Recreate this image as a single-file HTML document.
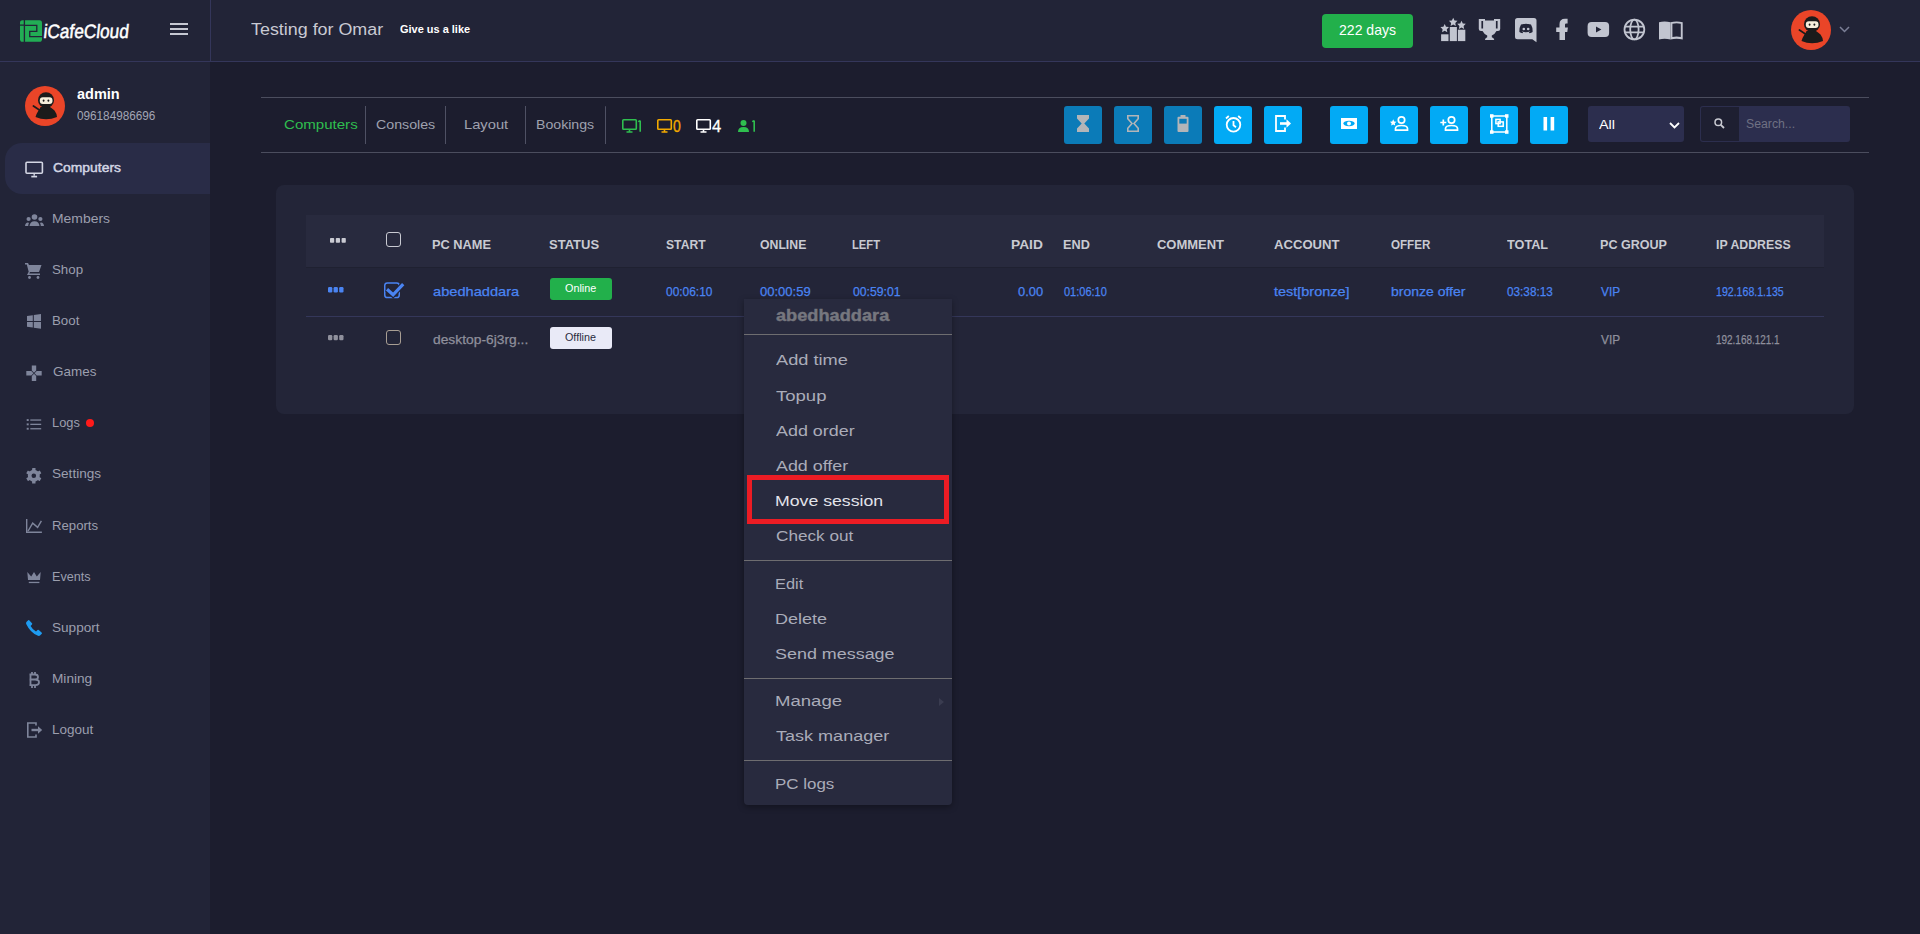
<!DOCTYPE html>
<html><head><meta charset="utf-8"><style>
html,body{margin:0;padding:0;width:1920px;height:934px;overflow:hidden;background:#1c1d2e;font-family:'Liberation Sans', sans-serif;}
.t{position:absolute;white-space:pre;transform-origin:0 0;}
.a{position:absolute;}
svg{position:absolute;overflow:visible;}
</style></head><body>
<!-- header -->
<div class="a" style="left:0;top:0;width:1920px;height:61px;background:#222437;"></div>
<div class="a" style="left:0;top:61px;width:1920px;height:1px;background:#34365a;"></div>
<div class="a" style="left:210px;top:0;width:1px;height:61px;background:#34365a;"></div>
<!-- sidebar -->
<div class="a" style="left:0;top:62px;width:210px;height:872px;background:#222437;"></div>
<div class="a" style="left:5px;top:143px;width:205px;height:51px;background:#292c47;border-radius:17px 0 0 17px;"></div>
<!-- logo -->
<svg style="left:20px;top:20px" width="22" height="22" viewBox="0 0 21.5 21.2">
  <rect x="0" y="0" width="21.5" height="21.2" rx="2.5" fill="#22ad55"/>
  <path d="M4.3 -1V23 M-1 4.9H4.3 M4.3 5.1H16.4V11H9.5V16.1H23" stroke="#222437" stroke-width="1.3" fill="none"/>
</svg>
<!-- hamburger -->
<div class="a" style="left:170px;top:22.5px;width:18px;height:2px;background:#c6c8d2;"></div>
<div class="a" style="left:170px;top:27.5px;width:18px;height:2px;background:#c6c8d2;"></div>
<div class="a" style="left:170px;top:32.5px;width:18px;height:2px;background:#c6c8d2;"></div>
<!-- green badge -->
<div class="a" style="left:1322px;top:14px;width:91px;height:34px;background:#22b04b;border-radius:4px;"></div>
<!-- header icons -->
<svg style="left:1436px;top:14px" width="104" height="32" viewBox="0 0 104 32" fill="#c2c5d0">
  <rect x="5.1" y="20.3" width="7.4" height="6.8"/><rect x="13.8" y="13" width="7.1" height="14.1"/><rect x="21.9" y="15.7" width="7.4" height="11.4"/>
  <path d="M8.7 10l1.3 2.7 3 .4-2.2 2.1.5 3-2.6-1.4-2.6 1.4.5-3-2.2-2.1 3-.4z"/>
  <path d="M17.2 3.7l1.3 2.7 3 .4-2.2 2.1.5 3-2.6-1.4-2.6 1.4.5-3-2.2-2.1 3-.4z"/>
  <path d="M25.5 6.7l1.3 2.7 3 .4-2.2 2.1.5 3-2.6-1.4-2.6 1.4.5-3-2.2-2.1 3-.4z"/>
  <path fill-rule="evenodd" d="M42.8 4.9H49V6.5H58V4.9H64.2V15Q64.2 17 62 17H60.5Q59 20 55.8 21.5V23.3Q58 23.8 58.3 26H48.9Q49.2 23.8 51.2 23.3V21.5Q48 20 46.5 17H45Q42.8 17 42.8 15Z M45.4 7V14.6H47.1V7Z M59.9 7V14.6H61.6V7Z"/>
  <path d="M81.5 4.1H98Q100.5 4.1 100.5 6.6V28.2L96.3 25.2H81.5Q79 25.2 79 22.7V6.6Q79 4.1 81.5 4.1Z"/>
  <path d="M85 10.5Q87.3 9.6 88.6 10Q89.8 9.8 90 9.8Q90.2 9.8 91.4 10Q92.7 9.6 95 10.5Q96.8 13.5 96.6 18Q95.3 19 93.6 19.3L92.8 18.2Q94 17.6 94.3 17.2Q92.3 18.2 90 18.2Q87.7 18.2 85.7 17.2Q86 17.6 87.2 18.2L86.4 19.3Q84.7 19 83.4 18Q83.2 13.5 85 10.5Z" fill="#222437"/>
  <circle cx="87.8" cy="15" r="1.3"/><circle cx="92.2" cy="15" r="1.3"/>
</svg>
<svg style="left:1550px;top:14px" width="140" height="32" viewBox="0 0 140 32" fill="#c2c5d0">
  <path d="M9.5 25.9V17.9H6.2V13.5H9.5V10.2Q9.5 4.7 15 4.7H17.6V9.5H16.1Q15 9.5 15 10.8V13.5H17.9L17.3 17.9H15V25.9Z"/>
  <rect x="37.6" y="8" width="21.5" height="15" rx="4"/>
  <path d="M46 12.4V18.6L51.4 15.5Z" fill="#222437"/>
  <g fill="none" stroke="#c2c5d0" stroke-width="1.8"><circle cx="84.4" cy="15.5" r="9.9"/><ellipse cx="84.4" cy="15.5" rx="4.2" ry="9.9"/><path d="M75 12.6H93.8M75 18.4H93.8"/></g>
  <path d="M109 8.2Q114.5 6.6 120.5 8.2V25.5Q114.5 24 109 25.5Z"/>
  <path fill-rule="evenodd" d="M120.5 8.2Q126.5 6.6 132.7 8.2V25.5Q126.5 24 120.5 25.5Z M122.4 9.8V23Q126.5 22.2 130.8 23V9.8Q126.5 8.8 122.4 9.8Z"/>
</svg>
<!-- header avatar -->
<svg style="left:1791px;top:10px" width="40" height="40" viewBox="0 0 40 40">
  <circle cx="20" cy="20" r="20" fill="#ea4528"/>
  <path d="M15.5 21 H25 Q27.5 22.5 29.5 24.5 Q31.8 27.5 32 31 Q21 35.5 10.5 31 Q11.5 27.5 13.5 24.5 Q15 22.5 15.5 21Z" fill="#1b1b1b"/>
  <circle cx="21" cy="14.2" r="8" fill="#1b1b1b"/>
  <rect x="14.8" y="11.3" width="12.7" height="6.6" rx="3" fill="#f6efdc"/>
  <ellipse cx="18.6" cy="14.6" rx="0.9" ry="1.2" fill="#1b1b1b"/><ellipse cx="23.4" cy="14.6" rx="0.9" ry="1.2" fill="#1b1b1b"/>
  <path d="M8.4 20 L14.8 24.2" stroke="#1b1b1b" stroke-width="1.7" stroke-linecap="round"/>
</svg>
<svg style="left:1839px;top:26px" width="11" height="7" viewBox="0 0 11 7"><path d="M1 1L5.5 5.5L10 1" stroke="#7b7f96" stroke-width="1.5" fill="none"/></svg>
<!-- sidebar avatar -->
<svg style="left:25px;top:86px" width="40" height="40" viewBox="0 0 40 40">
  <circle cx="20" cy="20" r="20" fill="#ea4528"/>
  <path d="M15.5 21 H25 Q27.5 22.5 29.5 24.5 Q31.8 27.5 32 31 Q21 35.5 10.5 31 Q11.5 27.5 13.5 24.5 Q15 22.5 15.5 21Z" fill="#1b1b1b"/>
  <circle cx="21" cy="14.2" r="8" fill="#1b1b1b"/>
  <rect x="14.8" y="11.3" width="12.7" height="6.6" rx="3" fill="#f6efdc"/>
  <ellipse cx="18.6" cy="14.6" rx="0.9" ry="1.2" fill="#1b1b1b"/><ellipse cx="23.4" cy="14.6" rx="0.9" ry="1.2" fill="#1b1b1b"/>
  <path d="M8.4 20 L14.8 24.2" stroke="#1b1b1b" stroke-width="1.7" stroke-linecap="round"/>
</svg>
<!-- sidebar icons -->
<svg style="left:25px;top:161px" width="19" height="17" viewBox="0 0 19 17" fill="none" stroke="#d3d6e4" stroke-width="1.6">
  <rect x="1" y="1.2" width="16.4" height="11" rx="1"/><path d="M9.2 12V14.8" stroke-width="1.4"/><path d="M6.3 15.6H12.1" stroke-width="1.7"/>
</svg>
<svg style="left:25px;top:214px" width="19" height="12" viewBox="0 0 19 12" fill="#7f859b">
  <circle cx="9.5" cy="3" r="2.8"/><circle cx="3.6" cy="5" r="2.1"/><circle cx="15.4" cy="5" r="2.1"/>
  <path d="M4.5 12Q5 7.3 9.5 7.3Q14 7.3 14.5 12Z M0 12Q0.3 8.6 3 8.4Q3.6 8.4 4 9Q3.3 10 3.2 12Z M19 12Q18.7 8.6 16 8.4Q15.4 8.4 15 9Q15.7 10 15.8 12Z"/>
</svg>
<svg style="left:25px;top:263px" width="17" height="16" viewBox="0 0 17 16" fill="#7f859b">
  <path d="M0 0H3L4 2H16.5L14 9H5L4.3 10.5H15V12H2L3.7 8.8L1.8 1.5H0Z"/><circle cx="4.5" cy="14.5" r="1.4"/><circle cx="13" cy="14.5" r="1.4"/>
</svg>
<svg style="left:27px;top:314px" width="14" height="15" viewBox="0 0 14 15" fill="#7f859b">
  <path d="M0 2L5.8 1.2V6.9H0Z M6.8 1L14 0V6.9H6.8Z M0 7.9H5.8V13.6L0 12.8Z M6.8 7.9H14V14.8L6.8 13.8Z"/>
</svg>
<svg style="left:26px;top:365px" width="17" height="17" viewBox="0 0 17 17" fill="#7f859b">
  <path d="M5.8 0.6H10.2V5.6L8 7.8L5.8 5.6Z M5.8 15.9H10.2V10.9L8 8.7L5.8 10.9Z M0.3 6.1V10.5H5.3L7.5 8.3L5.3 6.1Z M15.7 6.1V10.5H10.7L8.5 8.3L10.7 6.1Z"/>
</svg>
<svg style="left:26px;top:418px" width="16" height="13" viewBox="0 0 16 13" fill="#7f859b">
  <rect x="0.7" y="1.1" width="2" height="1.9"/><rect x="0.7" y="5.4" width="2" height="1.9"/><rect x="0.7" y="9.8" width="2" height="1.9"/>
  <rect x="4.3" y="1.4" width="10.9" height="1.3"/><rect x="4.3" y="5.7" width="10.9" height="1.3"/><rect x="4.3" y="10.1" width="10.9" height="1.3"/>
</svg>
<div class="a" style="left:86px;top:419px;width:8px;height:8px;border-radius:50%;background:#ff1a1a;"></div>
<svg style="left:26px;top:467.5px" width="16" height="16" viewBox="0 0 16 16" fill="#7f859b">
  <g transform="translate(7.8 7.8)">
    <path fill-rule="evenodd" d="M0 -6A6 6 0 1 1 0 6A6 6 0 1 1 0 -6Z M0 -2.3A2.3 2.3 0 1 0 0 2.3A2.3 2.3 0 1 0 0 -2.3Z"/>
    <g><rect x="-1.7" y="-7.8" width="3.4" height="3" rx="0.4"/><rect x="-1.7" y="4.8" width="3.4" height="3" rx="0.4"/></g>
    <g transform="rotate(60)"><rect x="-1.7" y="-7.8" width="3.4" height="3" rx="0.4"/><rect x="-1.7" y="4.8" width="3.4" height="3" rx="0.4"/></g>
    <g transform="rotate(120)"><rect x="-1.7" y="-7.8" width="3.4" height="3" rx="0.4"/><rect x="-1.7" y="4.8" width="3.4" height="3" rx="0.4"/></g>
  </g>
</svg>
<svg style="left:26px;top:519px" width="17" height="15" viewBox="0 0 17 15" fill="none" stroke="#7f859b" stroke-width="1.4">
  <path d="M0.7 0V13.3H15.9 M2.1 12L6.7 4.1L11.6 8.4L15.4 1.8"/>
</svg>
<svg style="left:27px;top:572px" width="15" height="12" viewBox="0 0 15 12" fill="#7f859b">
  <path d="M0.3 0L4.2 4.4L7 0L9.8 4.4L13.7 0L13 8.1H1Z"/><rect x="1.8" y="9.8" width="10.6" height="1.3"/>
</svg>
<svg style="left:26px;top:620px" width="16" height="16" viewBox="0 0 16 16" fill="#1e9bf0">
  <path d="M3.2 0.2L6 3.2Q6.5 3.8 6 4.5L4.6 6Q6.5 9.6 10 11.4L11.5 10Q12.2 9.5 12.8 10L15.8 12.8Q16.2 13.3 15.8 13.8L14 15.6Q13.2 16.2 12 15.8Q4.5 13 0.2 4Q-0.2 2.8 0.4 2L2.2 0.2Q2.7 -0.2 3.2 0.2Z"/>
</svg>
<svg style="left:28px;top:672px" width="12" height="16" viewBox="0 0 12 16" fill="none" stroke="#7f859b" stroke-width="1.8">
  <path d="M1.5 2.5H7Q10 2.5 10 5Q10 7.5 7 7.5H1.5 M7 7.5Q11 7.5 11 10.3Q11 13.2 7.5 13.2H1.5 M2.5 2.5V13.2 M4 0V2.5M7 0V2.5M4 13.2V16M7 13.2V16"/>
</svg>
<svg style="left:27px;top:722px" width="16" height="16" viewBox="0 0 16 16" fill="none" stroke="#7f859b" stroke-width="1.6">
  <path d="M9 3.5V1H0.8V15H9V12.5"/><path d="M4.5 8H12" stroke-width="2.4"/><path d="M11 4.3L15.2 8L11 11.7Z" fill="#7f859b" stroke="none"/>
</svg>

<!-- toolbar lines -->
<div class="a" style="left:261px;top:97px;width:1608px;height:1px;background:#4b4d5e;"></div>
<div class="a" style="left:261px;top:152px;width:1608px;height:1px;background:#4b4d5e;"></div>
<div class="a" style="left:365px;top:106px;width:1px;height:38px;background:#4f5164;"></div>
<div class="a" style="left:445px;top:106px;width:1px;height:38px;background:#4f5164;"></div>
<div class="a" style="left:525px;top:106px;width:1px;height:38px;background:#4f5164;"></div>
<div class="a" style="left:605px;top:106px;width:1px;height:38px;background:#4f5164;border-top-right-radius:3px;"></div>
<!-- status icons -->
<svg style="left:621.5px;top:119px" width="16" height="14" viewBox="0 0 16 14" fill="none" stroke="#2fbf4f" stroke-width="1.6"><rect x="0.8" y="0.8" width="13.5" height="9.4" rx="0.8"/><path d="M7.5 10.5V12.5M4.5 13H10.5"/></svg>
<svg style="left:656.5px;top:119px" width="16" height="14" viewBox="0 0 16 14" fill="none" stroke="#f2a900" stroke-width="1.6"><rect x="0.8" y="0.8" width="13.5" height="9.4" rx="0.8"/><path d="M7.5 10.5V12.5M4.5 13H10.5"/></svg>
<svg style="left:695.5px;top:119px" width="16" height="14" viewBox="0 0 16 14" fill="none" stroke="#ffffff" stroke-width="1.6"><rect x="0.8" y="0.8" width="13.5" height="9.4" rx="0.8"/><path d="M7.5 10.5V12.5M4.5 13H10.5"/></svg>
<svg style="left:738px;top:120px" width="11" height="12" viewBox="0 0 11 12" fill="#2fbf4f"><circle cx="5.5" cy="3" r="3"/><path d="M0 12Q0 7 5.5 7Q11 7 11 12Z"/></svg>

<svg style="left:636px;top:119px" width="8" height="14" viewBox="0 0 8 14"><path d="M4.2 1.6V12.7M2.2 2.6L4.2 1.6" stroke="#2fbf4f" stroke-width="1.6" fill="none"/></svg>
<svg style="left:750px;top:119px" width="8" height="14" viewBox="0 0 8 14"><path d="M4.2 1.6V12.7M2.2 2.6L4.2 1.6" stroke="#2fbf4f" stroke-width="1.6" fill="none"/></svg>
<!-- action buttons -->
<div class="a" style="left:1064px;top:106px;width:38px;height:38px;background:#0b7bb8;border-radius:3px;"></div>
<div class="a" style="left:1114px;top:106px;width:38px;height:38px;background:#0b7bb8;border-radius:3px;"></div>
<div class="a" style="left:1164px;top:106px;width:38px;height:38px;background:#0b7bb8;border-radius:3px;"></div>
<div class="a" style="left:1214px;top:106px;width:38px;height:38px;background:#02aaf5;border-radius:3px;"></div>
<div class="a" style="left:1264px;top:106px;width:38px;height:38px;background:#02aaf5;border-radius:3px;"></div>
<div class="a" style="left:1330px;top:106px;width:38px;height:38px;background:#02aaf5;border-radius:3px;"></div>
<div class="a" style="left:1380px;top:106px;width:38px;height:38px;background:#02aaf5;border-radius:3px;"></div>
<div class="a" style="left:1430px;top:106px;width:38px;height:38px;background:#02aaf5;border-radius:3px;"></div>
<div class="a" style="left:1480px;top:106px;width:38px;height:38px;background:#02aaf5;border-radius:3px;"></div>
<div class="a" style="left:1530px;top:106px;width:38px;height:38px;background:#02aaf5;border-radius:3px;"></div>
<!-- button icons -->
<svg style="left:1077px;top:115px" width="12" height="17" viewBox="0 0 12 17" fill="#b3b5b8"><path d="M0 0H12V3.5L7.3 8.5L12 13.5V17H0V13.5L4.7 8.5L0 3.5Z"/></svg>
<svg style="left:1127px;top:115px" width="12" height="17" viewBox="0 0 12 17" fill="none" stroke="#b3b5b8" stroke-width="1.6"><path d="M0.8 0.8H11.2V3.8L7 8.5L11.2 13.2V16.2H0.8V13.2L5 8.5L0.8 3.8Z"/></svg>
<svg style="left:1177px;top:115px" width="12" height="17" viewBox="0 0 12 17"><rect x="3.5" y="0" width="5" height="2" fill="#b3b5b8"/><rect x="0.5" y="1.8" width="11" height="15.2" rx="1" fill="#b3b5b8"/><rect x="2.3" y="3.8" width="7.4" height="4.8" fill="#0b7bb8"/></svg>
<svg style="left:1225px;top:115px" width="17" height="18" viewBox="0 0 17 18" fill="none" stroke="#fff" stroke-width="1.8"><circle cx="8.5" cy="9.8" r="6.8"/><path d="M8.5 6V10.3L11 12.3"/><path d="M1 3.5L3.8 1M16 3.5L13.2 1"/></svg>
<svg style="left:1275px;top:115px" width="17" height="17" viewBox="0 0 17 17" fill="none" stroke="#fff" stroke-width="1.8"><path d="M10 4.5V1H1V16H10V12.5"/><path d="M5 8.5H12" stroke-width="2.6"/><path d="M11.5 4.3L16 8.5L11.5 12.7Z" fill="#fff" stroke="none"/></svg>
<svg style="left:1341px;top:118px" width="16" height="11" viewBox="0 0 16 11"><rect x="0" y="0" width="16" height="11" fill="#fff"/><ellipse cx="8" cy="5.5" rx="5.6" ry="2.7" fill="#02aaf5"/><circle cx="8" cy="5.5" r="2" fill="#fff"/></svg>
<svg style="left:1390px;top:116px" width="19" height="15" viewBox="0 0 19 15" fill="none" stroke="#fff" stroke-width="1.7"><circle cx="11.5" cy="4" r="3.2"/><path d="M5.5 14.2V12.5Q5.5 9.5 11.5 9.5Q17.5 9.5 17.5 12.5V14.2Z"/><path d="M3.2 3.3l1 2.1 2.3.3-1.7 1.6.4 2.3-2-1.1-2 1.1.4-2.3L-0.1 5.7l2.3-.3z" fill="#fff" stroke="none"/></svg>
<svg style="left:1440px;top:116px" width="19" height="15" viewBox="0 0 19 15" fill="none" stroke="#fff" stroke-width="1.7"><circle cx="11.5" cy="4" r="3.2"/><path d="M5.5 14.2V12.5Q5.5 9.5 11.5 9.5Q17.5 9.5 17.5 12.5V14.2Z"/><path d="M0.3 6.5H6.3M3.3 3.5V9.5"/></svg>
<svg style="left:1490px;top:114px" width="19" height="20" viewBox="0 0 19 20" fill="none" stroke="#fff" stroke-width="1.5"><rect x="1.8" y="2" width="15" height="16"/><rect x="0" y="0.2" width="3.5" height="3.5" fill="#fff" stroke="none"/><rect x="15" y="0.2" width="3.5" height="3.5" fill="#fff" stroke="none"/><rect x="0" y="16.3" width="3.5" height="3.5" fill="#fff" stroke="none"/><rect x="15" y="16.3" width="3.5" height="3.5" fill="#fff" stroke="none"/><rect x="5.9" y="5.4" width="4.2" height="4.2"/><rect x="8.2" y="7.9" width="5" height="4.4"/></svg>
<svg style="left:1543px;top:117px" width="12" height="14" viewBox="0 0 12 14" fill="#fff"><rect x="0.5" y="0" width="3.6" height="13.5"/><rect x="7.6" y="0" width="3.6" height="13.5"/></svg>
<!-- select & search -->
<div class="a" style="left:1588px;top:106px;width:96px;height:36px;background:#2c2e4e;border-radius:3px;"></div>
<svg style="left:1669px;top:122px" width="11" height="7" viewBox="0 0 11 7"><path d="M1 1L5.5 5.5L10 1" stroke="#fff" stroke-width="1.8" fill="none"/></svg>
<div class="a" style="left:1700px;top:106px;width:150px;height:36px;background:#2c2e4e;border-radius:3px;"></div>
<div class="a" style="left:1701px;top:107px;width:38px;height:34px;background:#1e1f31;border-radius:2px 0 0 2px;"></div>
<svg style="left:1714px;top:118px" width="11" height="11" viewBox="0 0 11 11" fill="none" stroke="#c9cad2" stroke-width="1.5"><circle cx="4.3" cy="4.3" r="3.3"/><path d="M6.8 6.8L10 10" stroke-width="1.8"/></svg>

<!-- card -->
<div class="a" style="left:276px;top:185px;width:1578px;height:229px;background:#232538;border-radius:8px;"></div>
<div class="a" style="left:306px;top:215px;width:1518px;height:52px;background:#282a3e;"></div>
<div class="a" style="left:306px;top:267px;width:1518px;height:1px;background:#1f2131;"></div>
<div class="a" style="left:306px;top:316px;width:1518px;height:1px;background:#34375a;"></div>
<!-- dots -->
<svg style="left:330px;top:237.5px" width="16" height="5" viewBox="0 0 16 5" fill="#c9cad2"><rect x="0" y="0" width="4.2" height="4.8" rx="0.8"/><rect x="5.8" y="0" width="4.2" height="4.8" rx="0.8"/><rect x="11.6" y="0" width="4.2" height="4.8" rx="0.8"/></svg>
<svg style="left:327.5px;top:286.5px" width="16" height="6" viewBox="0 0 16 6" fill="#4a84f2"><rect x="0" y="0" width="4.3" height="5.5" rx="1.2"/><rect x="5.6" y="0" width="4.3" height="5.5" rx="1.2"/><rect x="11.2" y="0" width="4.3" height="5.5" rx="1.2"/></svg>
<svg style="left:327.5px;top:335px" width="16" height="6" viewBox="0 0 16 6" fill="#8f909c"><rect x="0" y="0" width="4.3" height="5.2" rx="1.2"/><rect x="5.6" y="0" width="4.3" height="5.2" rx="1.2"/><rect x="11.2" y="0" width="4.3" height="5.2" rx="1.2"/></svg>
<!-- checkboxes -->
<div class="a" style="left:386px;top:232px;width:13px;height:13px;border:1.6px solid #c9cad2;border-radius:3px;"></div>
<svg style="left:380px;top:278px" width="26" height="24" viewBox="380 278 26 24" fill="none"><rect x="384.75" y="283" width="14.5" height="14.5" rx="2.6" stroke="#4a84f2" stroke-width="1.5"/><path d="M387 289.2L393.1 294.8L403.2 284.2" stroke="#232538" stroke-width="5.5"/><path d="M387 289.2L393.1 294.8L403.2 284.2" stroke="#4a84f2" stroke-width="3.2"/></svg>
<div class="a" style="left:386px;top:330px;width:13px;height:13px;border:1.5px solid #a89e93;border-radius:3px;"></div>
<!-- badges -->
<div class="a" style="left:550px;top:278px;width:62px;height:22px;background:#22b04b;border-radius:3px;"></div>
<div class="a" style="left:550px;top:327px;width:62px;height:22px;background:#e9eaf7;border-radius:3px;"></div>

<!-- context menu -->
<div class="a" style="left:744px;top:299px;width:208px;height:506px;background:#282a3e;border-radius:0 0 4px 4px;box-shadow:0 2px 6px rgba(0,0,0,0.35);"></div>
<div class="a" style="left:744px;top:334px;width:208px;height:1px;background:#6e6d70;"></div>
<div class="a" style="left:744px;top:560px;width:208px;height:1px;background:#6e6d70;"></div>
<div class="a" style="left:744px;top:678px;width:208px;height:1px;background:#6e6d70;"></div>
<div class="a" style="left:744px;top:760px;width:208px;height:1px;background:#6e6d70;"></div>
<svg style="left:939px;top:698px" width="5" height="8" viewBox="0 0 5 8"><path d="M0 0L5 4L0 8Z" fill="#3a3c50"/></svg>
<div class="a" style="left:747px;top:475px;width:192px;height:39px;border:5px solid #ec1c24;"></div>

<div class="t" style="left:251.00px;top:22px;font-size:16px;line-height:16px;font-weight:400;color:#c9cad3;transform:scaleX(1.1176);">Testing for Omar</div><div class="t" style="left:400.00px;top:23px;font-size:11.6px;line-height:11.6px;font-weight:700;color:#ffffff;transform:scaleX(0.9459);">Give us a like</div><div class="t" style="left:1339.00px;top:23px;font-size:14.3px;line-height:14.3px;font-weight:400;color:#ffffff;transform:scaleX(0.9828);">222 days</div><div class="t" style="left:43.12px;top:22px;font-size:19.5px;line-height:19.5px;font-weight:400;color:#ffffff;transform:scaleX(0.8842) skewX(-7deg);transform-origin:0 16px;-webkit-text-stroke:0.5px #fff;">iCafeCloud</div><div class="t" style="left:77.00px;top:87px;font-size:14px;line-height:14px;font-weight:700;color:#ffffff;transform:scaleX(1.0366);">admin</div><div class="t" style="left:77.00px;top:111px;font-size:11.9px;line-height:11.9px;font-weight:400;color:#a3a6b5;transform:scaleX(0.9873);">096184986696</div><div class="t" style="left:53.00px;top:161px;font-size:13.3px;line-height:13.3px;font-weight:400;color:#d3d6e4;transform:scaleX(1.0462);-webkit-text-stroke:0.45px #d3d6e4;">Computers</div><div class="t" style="left:51.95px;top:212px;font-size:13.3px;line-height:13.3px;font-weight:400;color:#9c9fae;transform:scaleX(1.0463);">Members</div><div class="t" style="left:52.00px;top:263px;font-size:13.3px;line-height:13.3px;font-weight:400;color:#9c9fae;">Shop</div><div class="t" style="left:52.00px;top:314px;font-size:13.3px;line-height:13.3px;font-weight:400;color:#9c9fae;">Boot</div><div class="t" style="left:53.00px;top:365px;font-size:13.3px;line-height:13.3px;font-weight:400;color:#9c9fae;transform:scaleX(1.0116);">Games</div><div class="t" style="left:52.04px;top:416px;font-size:13.3px;line-height:13.3px;font-weight:400;color:#9c9fae;transform:scaleX(0.9643);">Logs</div><div class="t" style="left:51.98px;top:467px;font-size:13.3px;line-height:13.3px;font-weight:400;color:#9c9fae;transform:scaleX(1.0213);">Settings</div><div class="t" style="left:52.01px;top:519px;font-size:13.3px;line-height:13.3px;font-weight:400;color:#9c9fae;transform:scaleX(0.9891);">Reports</div><div class="t" style="left:52.05px;top:570px;font-size:13.3px;line-height:13.3px;font-weight:400;color:#9c9fae;transform:scaleX(0.9500);">Events</div><div class="t" style="left:51.98px;top:621px;font-size:13.3px;line-height:13.3px;font-weight:400;color:#9c9fae;transform:scaleX(1.0217);">Support</div><div class="t" style="left:51.97px;top:672px;font-size:13.3px;line-height:13.3px;font-weight:400;color:#9c9fae;transform:scaleX(1.0263);">Mining</div><div class="t" style="left:51.99px;top:723px;font-size:13.3px;line-height:13.3px;font-weight:400;color:#9c9fae;transform:scaleX(1.0125);">Logout</div><div class="t" style="left:284.00px;top:118px;font-size:13px;line-height:13px;font-weight:400;color:#2fbf4f;transform:scaleX(1.1587);">Computers</div><div class="t" style="left:376.00px;top:118px;font-size:13px;line-height:13px;font-weight:400;color:#9fa1ae;transform:scaleX(1.0926);">Consoles</div><div class="t" style="left:463.57px;top:118px;font-size:13px;line-height:13px;font-weight:400;color:#9fa1ae;transform:scaleX(1.1316);">Layout</div><div class="t" style="left:536.41px;top:118px;font-size:13px;line-height:13px;font-weight:400;color:#9fa1ae;transform:scaleX(1.0865);">Bookings</div><div class="t" style="left:673.00px;top:119px;font-size:15.8px;line-height:15.8px;font-weight:400;color:#f2a900;transform:scaleX(0.8889);-webkit-text-stroke:0.3px #f2a900;">0</div><div class="t" style="left:712.00px;top:119px;font-size:15.8px;line-height:15.8px;font-weight:400;color:#ffffff;transform:scaleX(1.0444);-webkit-text-stroke:0.3px #fff;">4</div><div class="t" style="left:1599.00px;top:118px;font-size:13.5px;line-height:13.5px;font-weight:400;color:#ffffff;transform:scaleX(1.0667);">All</div><div class="t" style="left:1746.00px;top:118px;font-size:12px;line-height:12px;font-weight:400;color:#6f7183;transform:scaleX(1.0213);">Search...</div><div class="t" style="left:432.02px;top:238px;font-size:13px;line-height:13px;font-weight:700;color:#c9cad2;transform:scaleX(0.9831);">PC NAME</div><div class="t" style="left:549.00px;top:238px;font-size:13px;line-height:13px;font-weight:700;color:#c9cad2;">STATUS</div><div class="t" style="left:666.40px;top:238px;font-size:13px;line-height:13px;font-weight:700;color:#c9cad2;transform:scaleX(0.9349);">START</div><div class="t" style="left:759.80px;top:238px;font-size:13px;line-height:13px;font-weight:700;color:#c9cad2;transform:scaleX(0.9429);">ONLINE</div><div class="t" style="left:852.34px;top:238px;font-size:13px;line-height:13px;font-weight:700;color:#c9cad2;transform:scaleX(0.8625);">LEFT</div><div class="t" style="left:1011.44px;top:238px;font-size:13px;line-height:13px;font-weight:700;color:#c9cad2;transform:scaleX(1.0586);">PAID</div><div class="t" style="left:1062.62px;top:238px;font-size:13px;line-height:13px;font-weight:700;color:#c9cad2;transform:scaleX(0.9769);">END</div><div class="t" style="left:1156.90px;top:238px;font-size:13px;line-height:13px;font-weight:700;color:#c9cad2;">COMMENT</div><div class="t" style="left:1273.50px;top:238px;font-size:13px;line-height:13px;font-weight:700;color:#c9cad2;transform:scaleX(1.0077);">ACCOUNT</div><div class="t" style="left:1390.70px;top:238px;font-size:13px;line-height:13px;font-weight:700;color:#c9cad2;transform:scaleX(0.8932);">OFFER</div><div class="t" style="left:1507.00px;top:238px;font-size:13px;line-height:13px;font-weight:700;color:#c9cad2;transform:scaleX(0.9762);">TOTAL</div><div class="t" style="left:1599.73px;top:238px;font-size:13px;line-height:13px;font-weight:700;color:#c9cad2;transform:scaleX(0.9662);">PC GROUP</div><div class="t" style="left:1716.05px;top:238px;font-size:13px;line-height:13px;font-weight:700;color:#c9cad2;transform:scaleX(0.9487);">IP ADDRESS</div><div class="t" style="left:432.80px;top:286px;font-size:12.8px;line-height:12.8px;font-weight:400;color:#4a84f2;transform:scaleX(1.1421);-webkit-text-stroke:0.25px #4a84f2;">abedhaddara</div><div class="t" style="left:666.40px;top:286px;font-size:12.8px;line-height:12.8px;font-weight:400;color:#4a84f2;transform:scaleX(0.9320);-webkit-text-stroke:0.25px #4a84f2;">00:06:10</div><div class="t" style="left:760.00px;top:286px;font-size:12.8px;line-height:12.8px;font-weight:400;color:#4a84f2;transform:scaleX(1.0160);-webkit-text-stroke:0.25px #4a84f2;">00:00:59</div><div class="t" style="left:853.00px;top:286px;font-size:12.8px;line-height:12.8px;font-weight:400;color:#4a84f2;transform:scaleX(0.9540);-webkit-text-stroke:0.25px #4a84f2;">00:59:01</div><div class="t" style="left:1018.00px;top:286px;font-size:12.8px;line-height:12.8px;font-weight:400;color:#4a84f2;transform:scaleX(1.0080);-webkit-text-stroke:0.25px #4a84f2;">0.00</div><div class="t" style="left:1063.60px;top:286px;font-size:12.8px;line-height:12.8px;font-weight:400;color:#4a84f2;transform:scaleX(0.8600);-webkit-text-stroke:0.25px #4a84f2;">01:06:10</div><div class="t" style="left:1273.50px;top:286px;font-size:12.8px;line-height:12.8px;font-weight:400;color:#4a84f2;transform:scaleX(1.1288);-webkit-text-stroke:0.25px #4a84f2;">test[bronze]</div><div class="t" style="left:1390.70px;top:286px;font-size:12.8px;line-height:12.8px;font-weight:400;color:#4a84f2;transform:scaleX(1.0926);-webkit-text-stroke:0.25px #4a84f2;">bronze offer</div><div class="t" style="left:1507.00px;top:286px;font-size:12.8px;line-height:12.8px;font-weight:400;color:#4a84f2;transform:scaleX(0.9200);-webkit-text-stroke:0.25px #4a84f2;">03:38:13</div><div class="t" style="left:1600.70px;top:286px;font-size:12.8px;line-height:12.8px;font-weight:400;color:#4a84f2;transform:scaleX(0.9250);-webkit-text-stroke:0.25px #4a84f2;">VIP</div><div class="t" style="left:1716.17px;top:286px;font-size:12.8px;line-height:12.8px;font-weight:400;color:#4a84f2;transform:scaleX(0.8272);-webkit-text-stroke:0.25px #4a84f2;">192.168.1.135</div><div class="t" style="left:433.00px;top:334px;font-size:12.8px;line-height:12.8px;font-weight:400;color:#8f909c;transform:scaleX(1.0795);-webkit-text-stroke:0.25px #8f909c;">desktop-6j3rg...</div><div class="t" style="left:1600.70px;top:334px;font-size:12.8px;line-height:12.8px;font-weight:400;color:#8f909c;transform:scaleX(0.9250);-webkit-text-stroke:0.25px #8f909c;">VIP</div><div class="t" style="left:1716.22px;top:334px;font-size:12.8px;line-height:12.8px;font-weight:400;color:#8f909c;transform:scaleX(0.7778);-webkit-text-stroke:0.25px #8f909c;">192.168.121.1</div><div class="t" style="left:565.00px;top:284px;font-size:10px;line-height:10px;font-weight:400;color:#ffffff;transform:scaleX(1.0793);">Online</div><div class="t" style="left:564.80px;top:333px;font-size:10px;line-height:10px;font-weight:400;color:#2a2c3e;transform:scaleX(1.0759);">Offline</div><div class="t" style="left:776.00px;top:307px;font-size:16.3px;line-height:16.3px;font-weight:700;color:#76777f;transform:scaleX(1.1176);-webkit-text-stroke:0.4px #76777f;">abedhaddara</div><div class="t" style="left:776.00px;top:352px;font-size:15.2px;line-height:15.2px;font-weight:400;color:#aaacb9;transform:scaleX(1.2000);">Add time</div><div class="t" style="left:776.00px;top:388px;font-size:15.2px;line-height:15.2px;font-weight:400;color:#aaacb9;transform:scaleX(1.2195);">Topup</div><div class="t" style="left:776.00px;top:423px;font-size:15.2px;line-height:15.2px;font-weight:400;color:#aaacb9;transform:scaleX(1.1791);">Add order</div><div class="t" style="left:776.00px;top:458px;font-size:15.2px;line-height:15.2px;font-weight:400;color:#aaacb9;transform:scaleX(1.1774);">Add offer</div><div class="t" style="left:774.84px;top:493px;font-size:15.2px;line-height:15.2px;font-weight:400;color:#e2e3ea;transform:scaleX(1.1648);">Move session</div><div class="t" style="left:776.00px;top:528px;font-size:15.2px;line-height:15.2px;font-weight:400;color:#aaacb9;transform:scaleX(1.1304);">Check out</div><div class="t" style="left:774.92px;top:576px;font-size:15.2px;line-height:15.2px;font-weight:400;color:#aaacb9;transform:scaleX(1.0769);">Edit</div><div class="t" style="left:774.81px;top:611px;font-size:15.2px;line-height:15.2px;font-weight:400;color:#aaacb9;transform:scaleX(1.1860);">Delete</div><div class="t" style="left:774.82px;top:646px;font-size:15.2px;line-height:15.2px;font-weight:400;color:#aaacb9;transform:scaleX(1.1800);">Send message</div><div class="t" style="left:774.78px;top:693px;font-size:15.2px;line-height:15.2px;font-weight:400;color:#aaacb9;transform:scaleX(1.2222);">Manage</div><div class="t" style="left:776.00px;top:728px;font-size:15.2px;line-height:15.2px;font-weight:400;color:#aaacb9;transform:scaleX(1.1875);">Task manager</div><div class="t" style="left:774.88px;top:776px;font-size:15.2px;line-height:15.2px;font-weight:400;color:#aaacb9;transform:scaleX(1.1154);">PC logs</div>
</body></html>
